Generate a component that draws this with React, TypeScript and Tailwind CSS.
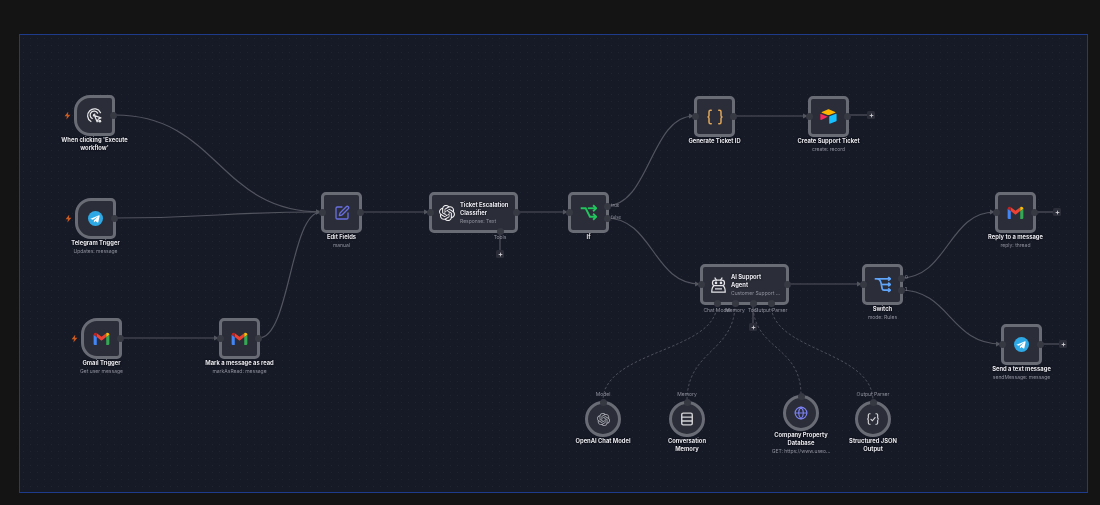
import { ReactNode } from 'react';
import { Globe, Plus, SquarePen } from 'lucide-react';
import { SiOpenai } from 'react-icons/si';

function CursorIcon() {
  return (
    <svg width="17" height="17" viewBox="0 0 24 24" fill="none" stroke="#e5e5e8" strokeWidth="1.800" strokeLinecap="round">
      <path d="M7 20.500A9.600 9.600 0 1 1 20.500 8" />
      <path d="M8.800 16.200A5.600 5.600 0 1 1 16.400 8.600" />
      <path d="M10.500 12.500A2 2 0 0 1 12.500 10.200" />
      <path d="M12 12l9 3.400-3.600 1.600-1.700 3.800z" fill="#2b2d38" strokeLinejoin="round" />
      <circle cx="19.500" cy="20" r="2" fill="#e5e5e8" stroke="none" />
    </svg>
  );
}

function TelegramIcon() {
  return (
    <svg width="15" height="15" viewBox="0 0 24 24">
      <circle cx="12" cy="12" r="12" fill="#2ea9e6" />
      <path d="M5 11.800l12.600-5c.7-.2 1.200.2 1 1.100l-2.100 10c-.2.800-.7 1-1.300.6l-3.300-2.400-1.700 1.600c-.3.3-.5.4-.9.4l.3-3.300 6-5.500c.3-.3-.1-.4-.4-.2l-7.500 4.700-3.200-1c-.7-.2-.7-.7.5-1z" fill="#fff" />
    </svg>
  );
}

function GmailIcon() {
  return (
    <svg width="17" height="13" viewBox="1.500 3.500 21 16.500">
      <path d="M2 18.500V7l4 3v10H3.500A1.500 1.500 0 0 1 2 18.500z" fill="#4285f4" />
      <path d="M22 18.500V7l-4 3v10h2.500a1.500 1.500 0 0 0 1.500-1.500z" fill="#34a853" />
      <path d="M6 5l6 4.500L18 5v5l-6 4.500L6 10z" fill="#ea4335" />
      <path d="M2 7c0-2 2.300-3.100 4-2v5L2 7z" fill="#c5221f" />
      <path d="M22 7c0-2-2.300-3.100-4-2v5l4-3z" fill="#fbbc04" />
    </svg>
  );
}

function AirtableIcon() {
  return (
    <svg width="17" height="15" viewBox="0 0 24 21">
      <path d="M10.800.6L2.600 4c-.5.2-.5.9 0 1.100l8.200 3.200c.8.3 1.600.3 2.400 0l8.200-3.200c.5-.2.5-.9 0-1.100L13.200.6c-.8-.3-1.600-.3-2.400 0z" fill="#fcb400" />
      <path d="M13 10.600v9.400c0 .5.4.8.9.6l9-3.400c.3-.1.5-.4.5-.6V7.200c0-.5-.5-.8-.9-.6l-9 3.400c-.3.1-.5.3-.5.6z" fill="#18bfff" />
      <path d="M11 11L8 12.400l-.3.2L1.500 15.500c-.4.2-1-.1-1-.6V7.500c0-.2.1-.3.2-.4.1-.1.2-.2.4-.2.1 0 .3 0 .4.1l9.500 3.700c.5.2.5.6 0 .8z" fill="#f82b60" />
    </svg>
  );
}

function IfIcon() {
  return (
    <svg width="17" height="17" viewBox="0 0 24 24" fill="none" stroke="#22c55e" strokeWidth="2.600">
      <path d="M1 6h7l6 12h9" />
      <path d="M11 6h12" />
      <path d="M18.500 1.800L23 6l-4.500 4.200" />
      <path d="M18.500 13.800L23 18l-4.500 4.200" />
    </svg>
  );
}

function SwitchIcon() {
  return (
    <svg width="17" height="17" viewBox="0 0 24 24" fill="none" stroke="#60a5fa" strokeWidth="2.400">
      <path d="M1 4h22" />
      <path d="M5 4c3 0 4 2 5 6l1.500 8c.2 1 .8 2 2.500 2h9" />
      <path d="M10.500 12H23" />
      <path d="M20 1.500L23 4l-3 2.500M20 9.500L23 12l-3 2.500M20 17.500L23 20l-3 2.500" />
    </svg>
  );
}

function RobotIcon() {
  return (
    <svg width="17" height="18" viewBox="0 0 24 24" fill="none" stroke="#e5e5e8" strokeWidth="1.700">
      <path d="M9 5L7 2M15 5l2-3" strokeLinecap="round" />
      <rect x="3.500" y="5" width="17" height="8" rx="4" />
      <circle cx="8.500" cy="9" r="1" fill="#e5e5e8" />
      <circle cx="15.500" cy="9" r="1" fill="#e5e5e8" />
      <path d="M5.500 13C2.800 15 2.500 18 2.500 22h19c0-4-.3-7-3-9" />
      <path d="M7 17.500h10" />
    </svg>
  );
}

function BracesIcon({ check }: { check?: boolean }) {
  const size = check ? 14 : 18;
  return (
    <svg width={size} height={size} viewBox="0 0 24 24" fill="none" stroke={check ? '#d4d4d8' : '#e0a65c'} strokeWidth="2" strokeLinecap="round">
      <path d="M7 3H6a2 2 0 0 0-2 2v5c0 1.100-.9 2-2 2 1.100 0 2 .9 2 2v5c0 1.100.9 2 2 2h1" />
      <path d="M17 3h1a2 2 0 0 1 2 2v5c0 1.100.9 2 2 2-1.100 0-2 .9-2 2v5a2 2 0 0 1-2 2h-1" />
      {check && <path d="M8.500 12.500l2.500 2.500 4.500-5.500" />}
    </svg>
  );
}

function MemoryIcon() {
  return (
    <svg width="14" height="14" viewBox="0 0 24 24" fill="none" stroke="#d4d4d8" strokeWidth="2.400">
      <rect x="3" y="2" width="18" height="20" rx="2.500" />
      <path d="M3 8.700h18M3 15.300h18" />
    </svg>
  );
}

function Handle({ className }: { className: string }) {
  return <span className={`absolute h-[7px] w-[7px] rounded-full bg-[#363842] ${className}`} />;
}

interface NodeProps {
  pos: string;
  icon?: ReactNode;
  name: string;
  sub?: string;
  trigger?: boolean;
  input?: boolean;
  output?: boolean;
  outputs?: string[];
}

function Bolt({ className }: { className: string }) {
  return <span className={`absolute top-[13.500px] h-[8px] w-[7px] bg-[#c8591f] [clip-path:polygon(62%_0,8%_58%,42%_58%,34%_100%,92%_40%,56%_40%)] ${className}`} />;
}

function Label({ name, sub }: { name: string; sub?: string }) {
  return (
    <div className="flex flex-col items-center text-center">
      <span className="whitespace-pre text-[5.800px] font-bold leading-[7.500px] text-[#e9e9f2] [text-shadow:0_0_2px_#000,0_0_1px_#000]">{name}</span>
      {sub && <span className="mt-[1.500px] whitespace-nowrap text-[5px] leading-[7px] text-[#8f919b]">{sub}</span>}
    </div>
  );
}

function FlowNode({ pos, icon, name, sub, trigger, input = true, output = true, outputs }: NodeProps) {
  return (
    <div className={`absolute flex w-[41px] flex-col items-center ${pos}`}>
      <div className={`relative flex h-[41px] w-[41px] shrink-0 items-center justify-center border-[3px] border-[#6a6c75] bg-[#2b2d38] ${trigger ? 'rounded-l-[16px] rounded-r-[5px]' : 'rounded-[5px]'}`}>
        {icon}
        {input && !trigger && <Handle className="left-[-5px] top-[14px]" />}
        {output && !outputs && <Handle className="right-[-5px] top-[14px]" />}
        {outputs && (
          <>
            <Handle className="right-[-5px] top-[7.500px]" />
            <Handle className="right-[-5px] top-[19.500px]" />
            <span className="absolute left-[40px] top-[8px] text-[4.500px] leading-[6px] text-[#8f919b]">{outputs[0]}</span>
            <span className="absolute left-[40px] top-[20px] text-[4.500px] leading-[6px] text-[#8f919b]">{outputs[1]}</span>
          </>
        )}
        {trigger && <Bolt className="left-[-13px]" />}
      </div>
      <Label name={name} sub={sub} />
    </div>
  );
}

function WideNode({ pos, icon, line1, line2, sub, handles }: { pos: string; icon: ReactNode; line1: string; line2: string; sub: string; handles: string[] }) {
  return (
    <div className={`absolute flex h-[41px] w-[89px] items-center gap-[4px] rounded-[5px] border-[3px] border-[#6a6c75] bg-[#2b2d38] pl-[6px] ${pos}`}>
      <span className="flex w-[18px] shrink-0 justify-center">{icon}</span>
      <div className="flex flex-col">
        <span className="whitespace-nowrap text-[5.800px] font-bold leading-[8px] text-[#e9e9f2] [text-shadow:0_0_2px_#000]">{line1}</span>
        <span className="whitespace-nowrap text-[5.800px] font-bold leading-[8px] text-[#e9e9f2] [text-shadow:0_0_2px_#000]">{line2}</span>
        <span className="whitespace-nowrap text-[5px] leading-[8px] text-[#8f919b]">{sub}</span>
      </div>
      <Handle className="left-[-5px] top-[14px]" />
      <Handle className="right-[-5px] top-[14px]" />
      {handles.map((h) => (
        <Handle key={h} className={`bottom-[-5px] ${h}`} />
      ))}
    </div>
  );
}

function CircleNode({ pos, icon, name, sub }: { pos: string; icon: ReactNode; name: string; sub?: string }) {
  return (
    <div className={`absolute flex w-[36px] flex-col items-center ${pos}`}>
      <div className="relative flex h-[36px] w-[36px] shrink-0 items-center justify-center rounded-full border-[3px] border-[#6a6c75] bg-[#2b2d38]">
        {icon}
        <Handle className="left-[11.500px] top-[-5px]" />
      </div>
      <Label name={name} sub={sub} />
    </div>
  );
}

function AddButton({ pos }: { pos: string }) {
  return (
    <span className={`absolute flex h-[8px] w-[8px] items-center justify-center rounded-[1.500px] bg-[#2b2d38] ${pos}`}>
      <Plus size={5} strokeWidth={4} color="#d4d4d8" />
    </span>
  );
}

function PortLabel({ text, pos }: { text: string; pos: string }) {
  return <span className={`absolute -translate-x-1/2 whitespace-nowrap text-[5px] leading-[7px] text-[#8f919b] ${pos}`}>{text}</span>;
}

const edges = [
  'M115 115C218 115 218 212 321 212',
  'M115 218C218 218 218 212 321 212',
  'M121 338H219',
  'M259 338C290 338 290 212 321 212',
  'M361 212H429',
  'M517 212H568',
  'M606 206C650 206 650 116 694 116',
  'M606 218C653 218 653 284 700 284',
  'M734 116H808',
  'M789 284H862',
  'M900 278C948 278 948 212 995 212',
  'M900 290C950 290 950 344 1001 344',
];

const stubs = ['M848 115H867', 'M1035 212H1053', 'M1041 344H1059', 'M500 230V250', 'M753 304V323'];

const dashed = [
  'M717 304C717 352 603 350 603 401',
  'M735 304C735 352 687 350 687 401',
  'M753 304C753 350 801 345 801 395',
  'M771 304C771 352 873 350 873 401',
];

export default function App() {
  return (
    <div className="relative h-[505px] w-[1100px] overflow-hidden bg-[#151414] pl-[19px] pt-[34px] font-['Inter',sans-serif] blur-[0.35px]">
      <div className="h-[459px] w-[1069px] border border-[#1e3a8a] bg-[#161a27] bg-[radial-gradient(#1f2431_0.5px,transparent_0.6px)] bg-[size:7px_7px]" />

      <svg className="absolute inset-0 h-full w-full" fill="none" stroke="#52545e" strokeWidth="1.200">
        <defs>
          <marker id="arrow" markerUnits="userSpaceOnUse" markerWidth="6" markerHeight="6" refX="5" refY="3" orient="auto">
            <path d="M0 0.500L5 3L0 5.500z" fill="#52545e" stroke="none" />
          </marker>
        </defs>
        {edges.map((d) => (
          <path key={d} d={d} markerEnd="url(#arrow)" />
        ))}
        {stubs.map((d) => (
          <path key={d} d={d} />
        ))}
        {dashed.map((d) => (
          <path key={d} d={d} strokeDasharray="2.500 2" strokeWidth="0.900" />
        ))}
      </svg>

      <FlowNode pos="left-[74px] top-[95px]" trigger icon={<CursorIcon />} name={"When clicking 'Execute\nworkflow'"} />
      <FlowNode pos="left-[75px] top-[198px]" trigger icon={<TelegramIcon />} name="Telegram Trigger" sub="Updates: message" />
      <FlowNode pos="left-[81px] top-[318px]" trigger icon={<GmailIcon />} name="Gmail Trigger" sub="Get user message" />
      <FlowNode pos="left-[219px] top-[318px]" icon={<GmailIcon />} name="Mark a message as read" sub="markAsRead: message" />
      <FlowNode pos="left-[321px] top-[192px]" icon={<SquarePen size={16} color="#6a6fe0" strokeWidth={2} />} name="Edit Fields" sub="manual" />
      <WideNode
        pos="left-[429px] top-[192px]"
        icon={<SiOpenai size={16} color="#f0f0f2" />}
        line1="Ticket Escalation"
        line2="Classifier"
        sub="Response: Text"
        handles={['left-[64.500px]']}
      />
      <FlowNode pos="left-[568px] top-[192px]" icon={<IfIcon />} name="If" outputs={['true', 'false']} />
      <FlowNode pos="left-[694px] top-[96px]" icon={<BracesIcon />} name="Generate Ticket ID" />
      <FlowNode pos="left-[808px] top-[96px]" icon={<AirtableIcon />} name="Create Support Ticket" sub="create: record" />
      <WideNode
        pos="left-[700px] top-[264px]"
        icon={<RobotIcon />}
        line1="AI Support"
        line2="Agent"
        sub="Customer Support ..."
        handles={['left-[10.500px]', 'left-[28.500px]', 'left-[46.500px]', 'left-[64.500px]']}
      />
      <FlowNode pos="left-[862px] top-[264px]" icon={<SwitchIcon />} name="Switch" sub="mode: Rules" outputs={['0', '1']} />
      <FlowNode pos="left-[995px] top-[192px]" icon={<GmailIcon />} name="Reply to a message" sub="reply: thread" />
      <FlowNode pos="left-[1001px] top-[324px]" icon={<TelegramIcon />} name="Send a text message" sub="sendMessage: message" />

      <CircleNode pos="left-[585px] top-[401px]" icon={<SiOpenai size={13} color="#a9aab2" />} name="OpenAI Chat Model" />
      <CircleNode pos="left-[669px] top-[401px]" icon={<MemoryIcon />} name={'Conversation\nMemory'} />
      <CircleNode pos="left-[783px] top-[395px]" icon={<Globe size={14} color="#7c80f0" />} name={'Company Property\nDatabase'} sub="GET: https://www.useo..." />
      <CircleNode pos="left-[855px] top-[401px]" icon={<BracesIcon check />} name={'Structured JSON\nOutput'} />

      <PortLabel text="Tools" pos="left-[500px] top-[234px]" />
      <PortLabel text="Chat Model" pos="left-[717px] top-[307px]" />
      <PortLabel text="Memory" pos="left-[735px] top-[307px]" />
      <PortLabel text="Tool" pos="left-[753px] top-[307px]" />
      <PortLabel text="Output Parser" pos="left-[771px] top-[307px]" />
      <PortLabel text="Model" pos="left-[603px] top-[391px]" />
      <PortLabel text="Memory" pos="left-[687px] top-[391px]" />
      <PortLabel text="Output Parser" pos="left-[873px] top-[391px]" />

      <AddButton pos="left-[867px] top-[111px]" />
      <AddButton pos="left-[1053px] top-[208px]" />
      <AddButton pos="left-[1059px] top-[340px]" />
      <AddButton pos="left-[496px] top-[250px]" />
      <AddButton pos="left-[749px] top-[323px]" />
    </div>
  );
}
